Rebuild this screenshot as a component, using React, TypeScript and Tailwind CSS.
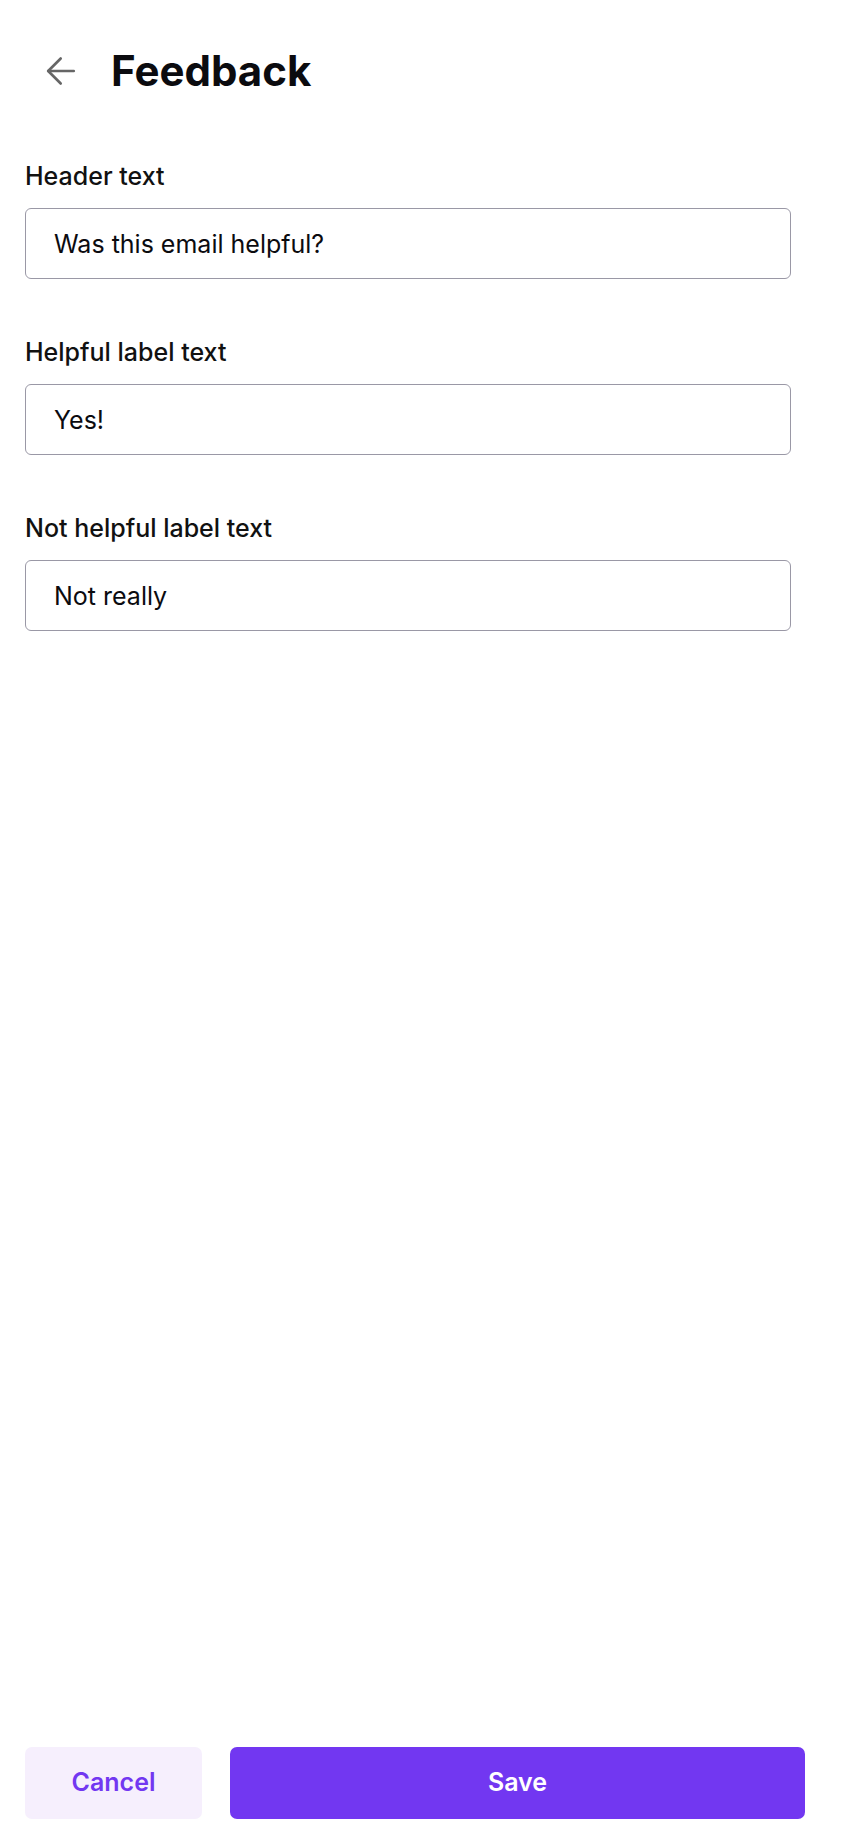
import React from "react";

const fields = [
  { label: "Header text", value: "Was this email helpful?" },
  { label: "Helpful label text", value: "Yes!" },
  { label: "Not helpful label text", value: "Not really" },
];

export default function App() {
  return (
    <div
      className="min-h-[1846px] w-[844px] bg-white flex flex-col text-[#0b0b0f]"
      style={{ fontFamily: "Inter, 'Noto Sans', sans-serif" }}
    >
      <div className="pt-[43px] pl-[45px] flex items-center h-[99px]">
        <svg width="32" height="32" viewBox="0 0 32 32" fill="none" stroke="#666666" strokeWidth="2.6" strokeLinecap="round" strokeLinejoin="round">
          <path d="M3.2 16H28.8" />
          <path d="M15.7 3.5L3.2 16L15.7 28.5" />
        </svg>
        <h1 className="ml-[34px] text-[42px] leading-[56px] font-bold">Feedback</h1>
      </div>

      <div className="pl-[25px] mt-[63px] flex flex-col gap-[59px]">
        {fields.map((f) => (
          <div key={f.label} className="flex flex-col">
            <label className="text-[25px] leading-[28px] font-medium text-[#111111]">{f.label}</label>
            <input
              readOnly
              defaultValue={f.value}
              className="mt-[18px] w-[766px] h-[71px] rounded-[6px] border border-[#9a98a6] px-[28px] text-[25px] text-[#0b0b0f] bg-white outline-none"
            />
          </div>
        ))}
      </div>

      <div className="mt-auto pl-[25px] pb-[27px] flex gap-[28px]">
        <button className="w-[177px] h-[72px] rounded-[7px] bg-[#f6effd] text-[#7237f1] text-[25px] font-semibold">
          Cancel
        </button>
        <button className="w-[575px] h-[72px] rounded-[7px] bg-[#7237f1] text-white text-[25px] font-semibold">
          Save
        </button>
      </div>
    </div>
  );
}
